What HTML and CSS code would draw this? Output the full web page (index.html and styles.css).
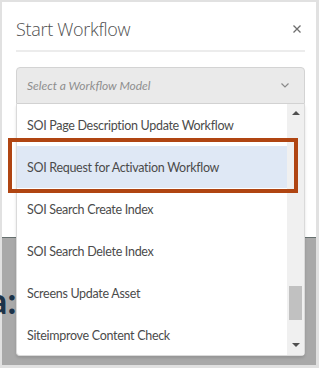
FILE: index.html
```html
<!DOCTYPE html>
<html lang="en">
<head>
    <meta charset="UTF-8">
    <meta name="viewport" content="width=device-width, initial-scale=1.0">
    <title>Start Workflow</title>
    <link rel="stylesheet" href="styles.css">
</head>
<body>
    <div class="stage">
        <div class="page-behind">a:</div>

        <div class="dialog">
            <div class="dialog-header">
                <h2>Start Workflow</h2>
                <button class="close" aria-label="Close">
                    <svg width="8" height="8" viewBox="0 0 8 8">
                        <path d="M0.5 0.5 L7.5 7.5 M7.5 0.5 L0.5 7.5" stroke="#6e6e6e" stroke-width="1.3" fill="none"/>
                    </svg>
                </button>
            </div>

            <div class="select">
                <div class="select-field">
                    <span class="placeholder">Select a Workflow Model</span>
                    <svg class="chevron" width="8" height="5" viewBox="0 0 8 5">
                        <path d="M0.5 0.5 L4 4 L7.5 0.5" stroke="#8a8a8a" stroke-width="1.2" fill="none"/>
                    </svg>
                </div>

                <div class="select-list">
                    <ul class="options">
                        <li>SOI Page Description Update Workflow</li>
                        <li class="is-selected">SOI Request for Activation Workflow<span class="callout"></span></li>
                        <li>SOI Search Create Index</li>
                        <li>SOI Search Delete Index</li>
                        <li>Screens Update Asset</li>
                        <li>Siteimprove Content Check</li>
                    </ul>
                    <div class="scrollbar">
                        <span class="arrow up"></span>
                        <span class="thumb"></span>
                        <span class="arrow down"></span>
                    </div>
                </div>
            </div>
        </div>
    </div>
</body>
</html>
```

FILE: styles.css
```css
:root {
    --text: #4b4b4b;
    --muted: #8e8e8e;
    --frame: #e1e1e1;
    --overlay: #a9a9a9;
    --line: #d3d3d3;
    --accent: #b04512;
}

* {
    box-sizing: border-box;
}

body {
    margin: 0;
    padding: 2px 3px 3px 2px;
    background: var(--frame);
    font-family: 'Lato', 'Open Sans', sans-serif;
    color: var(--text);
}

.stage {
    position: relative;
    height: 363px;
    background: var(--overlay);
}

/* page content dimmed behind the modal */
.page-behind {
    position: absolute;
    left: -13px;
    top: 276px;
    font-weight: bold;
    font-size: 36px;
    color: #1c3349;
}

.dialog {
    position: relative;
    height: 235px;
    padding: 0 11px 0 14px;
    background: #fff;
    box-shadow: 0 1px 0 #66706f;
}

.dialog-header {
    display: flex;
    align-items: center;
    justify-content: space-between;
    height: 50px;
    padding-top: 6px;
    border-bottom: 2px solid #ececec;
}

.dialog-header h2 {
    margin: 0;
    font-family: 'Open Sans', sans-serif;
    font-size: 18px;
    font-weight: 300;
    letter-spacing: -0.3px;
    color: #505050;
}

.close {
    display: flex;
    margin-right: 4px;
    padding: 0;
    border: none;
    background: none;
}

.select {
    position: relative;
    margin-top: 15px;
}

.select-field {
    display: flex;
    align-items: center;
    justify-content: space-between;
    height: 37px;
    padding: 0 15px 0 10px;
    border: 1px solid var(--line);
    border-radius: 4px 4px 0 0;
    background: #eaeaea;
}

.placeholder {
    font-size: 12px;
    font-style: italic;
    color: var(--muted);
}

.select-list {
    position: absolute;
    top: 100%;
    left: 0;
    right: 0;
    display: flex;
    height: 252px;
    border: 1px solid #dadada;
    border-top: none;
    border-radius: 0 0 4px 4px;
    background: #fff;
    box-shadow: 0 2px 3px rgba(0,0,0,0.12);
}

.options {
    flex: 1;
    margin: 0;
    padding: 0;
    list-style: none;
}

.options li {
    position: relative;
    display: flex;
    align-items: center;
    height: 42px;
    padding-left: 10px;
    font-size: 12.5px;
    letter-spacing: -0.3px;
    color: var(--text);
}

.options li.is-selected {
    background: #dfe8f5;
}

/* annotation box drawn over the selected row */
.callout {
    position: absolute;
    z-index: 2;
    top: -8px;
    bottom: -5px;
    left: -9px;
    right: -11px;
    border: 4px solid var(--accent);
}

.scrollbar {
    position: relative;
    width: 17px;
    background: #f0f0f0;
}

.arrow {
    position: absolute;
    left: 5px;
    width: 0;
    height: 0;
    border-left: 4px solid transparent;
    border-right: 4px solid transparent;
}

.arrow.up {
    top: 7px;
    border-bottom: 4px solid #505050;
}

.arrow.down {
    bottom: 8px;
    border-top: 4px solid #505050;
}

.thumb {
    position: absolute;
    left: 2px;
    right: 2px;
    top: 182px;
    height: 34px;
    background: #c1c1c1;
}
```
